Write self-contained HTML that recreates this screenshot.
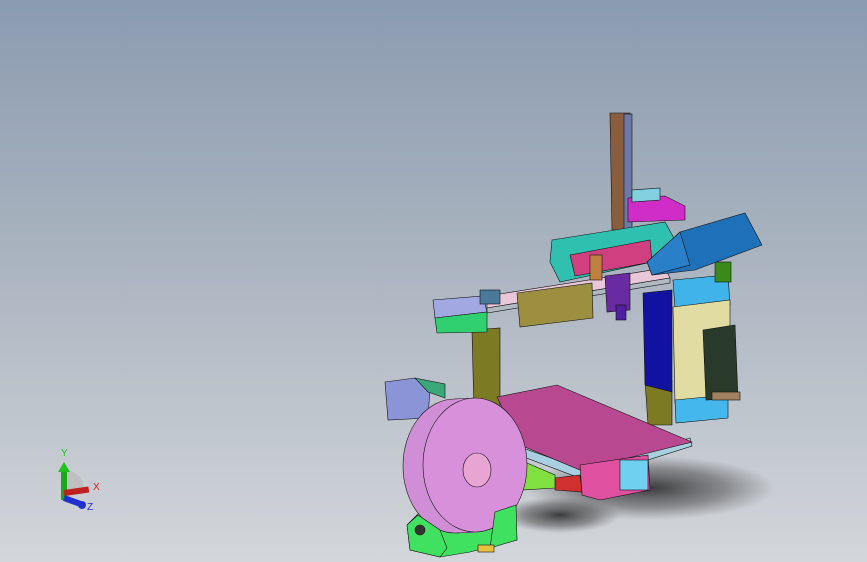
<!DOCTYPE html>
<html><head><style>
html,body{margin:0;padding:0}
body{width:867px;height:562px;overflow:hidden;background:linear-gradient(#8b9bb0 0%,#a9b3bf 45%,#d3d6da 100%);font-family:"Liberation Sans",sans-serif}
svg{position:absolute;left:0;top:0}
</style></head><body>
<svg width="867" height="562" viewBox="0 0 867 562" stroke="#111" stroke-width="0.6">
<defs><radialGradient id="sh" cx="0.5" cy="0.5" r="0.5"><stop offset="0" stop-color="#222" stop-opacity="0.85"/><stop offset="0.6" stop-color="#444" stop-opacity="0.5"/><stop offset="1" stop-color="#555" stop-opacity="0"/></radialGradient></defs>
<ellipse cx="650" cy="488" rx="125" ry="32" fill="url(#sh)" stroke="none"/>
<ellipse cx="560" cy="515" rx="60" ry="18" fill="url(#sh)" stroke="none"/>
<!-- Z column -->
<polygon points="610,113 630,113 630,230 612,230" fill="#8a5e3c"/>
<rect x="624" y="114" width="8" height="120" fill="#6c78a8"/>
<!-- left vertical frame -->
<polygon points="472,330 500,328 500,412 474,412" fill="#7c7a22"/>
<!-- right vertical -->
<polygon points="645,380 672,380 672,425 648,425" fill="#7c7a22"/>
<!-- X rail -->
<polygon points="487,296 665,268 670,278 487,308" fill="#e8c8d8"/>
<polygon points="487,308 670,278 670,283 487,313" fill="#b0b8c0"/>
<!-- top parts -->
<polygon points="628,198 665,196 685,206 685,220 628,222" fill="#d02cc8"/>
<polygon points="632,190 660,188 660,200 632,202" fill="#80d0e0"/>
<!-- drag chain -->
<polygon points="552,240 665,222 675,240 670,258 560,282 550,262" fill="#30c0b0"/>
<polygon points="570,255 650,240 652,262 575,276" fill="#d04080"/>
<rect x="590" y="255" width="12" height="25" fill="#c08040"/>
<!-- olive carriage -->
<polygon points="517,293 592,283 593,318 520,327" fill="#9c9040"/>
<!-- left motor -->
<polygon points="433,300 483,296 487,312 435,318" fill="#a2a8e2"/>
<polygon points="435,318 487,312 487,332 437,333" fill="#30d070"/>
<rect x="480" y="290" width="20" height="14" fill="#4a7a9a"/>
<!-- dark blue plate -->
<polygon points="643,293 672,290 672,392 645,385" fill="#1212a2"/>
<!-- hotend -->
<polygon points="605,276 630,273 630,310 607,312" fill="#6a2aa2"/>
<rect x="616" y="305" width="10" height="15" fill="#5020a0"/>
<!-- light blue box -->
<polygon points="673,280 728,275 730,305 675,308" fill="#40b4ea"/>
<!-- cream panel -->
<polygon points="673,307 730,300 730,395 675,403" fill="#e0dca2"/>
<polygon points="675,400 728,395 728,418 676,423" fill="#44b8ec"/>
<!-- board -->
<polygon points="703,330 735,325 738,398 706,400" fill="#2a3a2a"/>
<rect x="712" y="392" width="28" height="8" fill="#a08060"/>
<!-- green post -->
<rect x="715" y="262" width="16" height="20" fill="#3a8a1a"/>
<!-- blue hood -->
<polygon points="647,262 680,232 745,213 762,245 695,270 652,275" fill="#1e70b8"/>
<polygon points="647,262 680,232 690,265 652,275" fill="#2a80c8"/>
<!-- Y motor left -->
<polygon points="385,382 415,378 430,388 428,418 388,420" fill="#8c94d8"/>
<polygon points="415,378 445,384 445,398 428,392" fill="#3aa878"/>
<!-- bed frame -->
<polygon points="500,440 585,470 690,438 692,446 585,480 500,448" fill="#a8d0e0"/>
<!-- bed -->
<polygon points="497,397 557,385 692,442 580,470 520,445" fill="#b84890"/>
<!-- front motor -->
<polygon points="580,465 648,455 650,490 600,500 582,495" fill="#e050a0"/>
<rect x="620" y="460" width="28" height="30" fill="#70d0f0"/>
<polygon points="555,478 580,475 582,492 555,490" fill="#d03030"/>
<!-- green rails -->
<polygon points="520,460 555,475 555,488 522,490" fill="#80e040"/>
<!-- green base back -->
<polygon points="407,525 420,512 450,515 495,505 515,503 517,540 470,552 440,557 410,550" fill="#40e060"/>
<!-- spool -->
<ellipse cx="455" cy="466" rx="52" ry="67" fill="#d08ed6"/>
<rect x="455" y="399" width="20" height="134" fill="#d890da" stroke="none"/>
<line x1="455" y1="399" x2="475" y2="398" />
<line x1="455" y1="533" x2="475" y2="532" />
<ellipse cx="475" cy="465" rx="52" ry="67" fill="#d890da"/>
<ellipse cx="477" cy="470" rx="14" ry="17" fill="#e8a4d2"/>
<!-- base front -->
<polygon points="407,525 418,515 440,530 447,548 440,557 410,550" fill="#40e060"/>
<polygon points="495,512 516,505 517,540 490,548" fill="#40e060"/>
<circle cx="420" cy="530" r="5" fill="#333"/>
<rect x="478" y="545" width="16" height="7" fill="#e8c040"/>
<!-- axis triad -->
<g stroke="none">
<path d="M64,470 A20,20 0 0 1 84,493 L64,497Z" fill="#bbbbbb" opacity="0.8"/>
<rect x="61" y="470" width="6" height="30" fill="#1aa81a"/>
<polygon points="58,472 64,462 70,472" fill="#20c020"/>
<rect x="64" y="490" width="25" height="6" fill="#c02020" transform="rotate(-8 64 493)"/>
<rect x="64" y="495" width="20" height="6" fill="#2030d0" transform="rotate(20 64 498)"/>
<circle cx="82" cy="505" r="4" fill="#2030d0"/>
</g>
<g stroke="none" font-size="10">
<text x="61" y="456" fill="#20c020">Y</text>
<text x="93" y="490" fill="#e02020">X</text>
<text x="87" y="510" fill="#2030e0">Z</text>
</g>
</svg>
</body></html>
